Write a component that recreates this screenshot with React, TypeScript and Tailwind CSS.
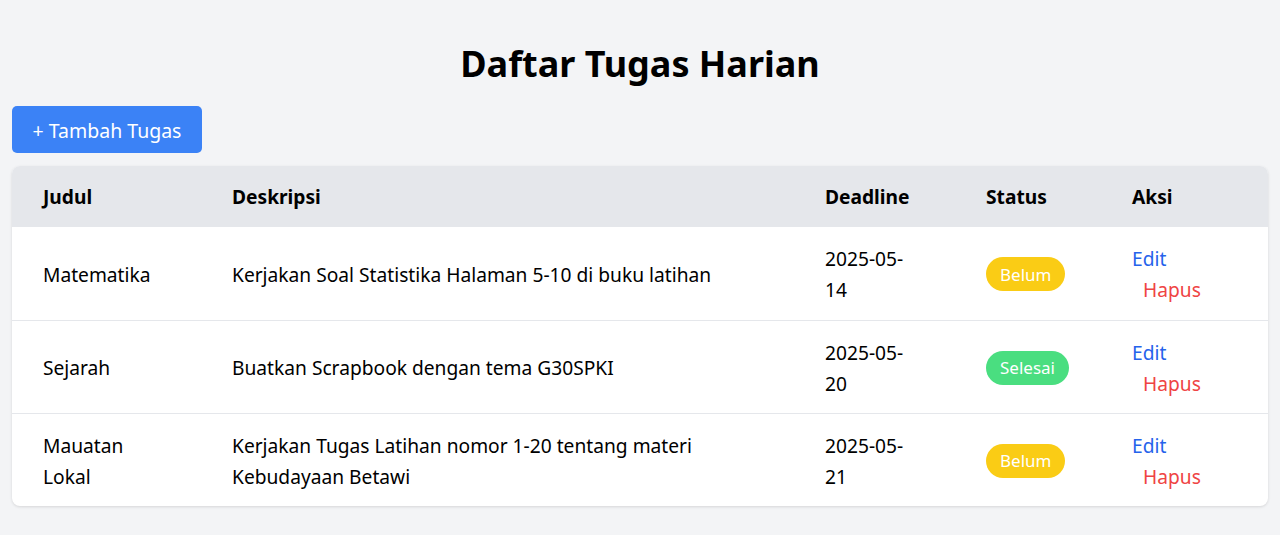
const tasks = [
  { judul: 'Matematika', deskripsi: 'Kerjakan Soal Statistika Halaman 5-10 di buku latihan', deadline: '2025-05-14', status: 'Belum' },
  { judul: 'Sejarah', deskripsi: 'Buatkan Scrapbook dengan tema G30SPKI', deadline: '2025-05-20', status: 'Selesai' },
  { judul: 'Mauatan Lokal', deskripsi: 'Kerjakan Tugas Latihan nomor 1-20 tentang materi Kebudayaan Betawi', deadline: '2025-05-21', status: 'Belum' },
];

export default function App() {
  return (
    <div className="min-h-[535px] bg-[#f3f4f6] px-3 pt-[38px] text-black [font-family:'Noto_Sans',sans-serif]">
      <h1 className="text-center text-[36px] font-bold leading-[52px]">Daftar Tugas Harian</h1>

      <button className="mt-[16px] h-[47px] w-[190px] rounded-[5px] bg-[#3b82f6] pt-[2px] text-[19.5px] text-white">
        + Tambah Tugas
      </button>

      <div className="mt-[13px] overflow-hidden rounded-lg bg-white shadow-[0_1px_3px_rgba(0,0,0,0.12)]">
        <table className="w-full table-fixed border-collapse text-left text-[19.2px]">
          <colgroup>
            <col className="w-[189px]" />
            <col className="w-[593px]" />
            <col className="w-[161px]" />
            <col className="w-[146px]" />
            <col />
          </colgroup>
          <thead className="bg-[#e5e7eb]">
            <tr className="h-[61px]">
              <th className="pl-[31px] pt-[2px] font-bold">Judul</th>
              <th className="pl-[31px] pt-[2px] font-bold">Deskripsi</th>
              <th className="pl-[31px] pt-[2px] font-bold">Deadline</th>
              <th className="pl-[31px] pt-[2px] font-bold">Status</th>
              <th className="pl-[31px] pt-[2px] font-bold">Aksi</th>
            </tr>
          </thead>
          <tbody>
            {tasks.map((t, i) => (
              <tr key={i} className={`h-[93px] leading-[31px] ${i > 0 ? 'border-t border-[#e5e7eb]' : ''}`}>
                <td className="pl-[31px] pr-[48px] pt-[2px] align-middle">{t.judul}</td>
                <td className="pl-[31px] pr-6 pt-[2px] align-middle">{t.deskripsi}</td>
                <td className="pl-[31px] pr-10 pt-[2px] align-middle">
                  {t.deadline.slice(0, 8)}
                  <br />
                  {t.deadline.slice(8)}
                </td>
                <td className="pl-[31px] pt-[2px] align-middle">
                  <span
                    className={`inline-flex h-[34px] items-center rounded-full px-[14px] text-[17px] text-white ${
                      t.status === 'Belum' ? 'bg-[#facc15]' : 'bg-[#4ade80]'
                    }`}
                  >
                    {t.status}
                  </span>
                </td>
                <td className="pl-[31px] pt-[2px] align-middle">
                  <div className="text-[#2563eb]">Edit</div>
                  <div className="ml-[11px] text-[#ef4444]">Hapus</div>
                </td>
              </tr>
            ))}
          </tbody>
        </table>
      </div>
    </div>
  );
}
